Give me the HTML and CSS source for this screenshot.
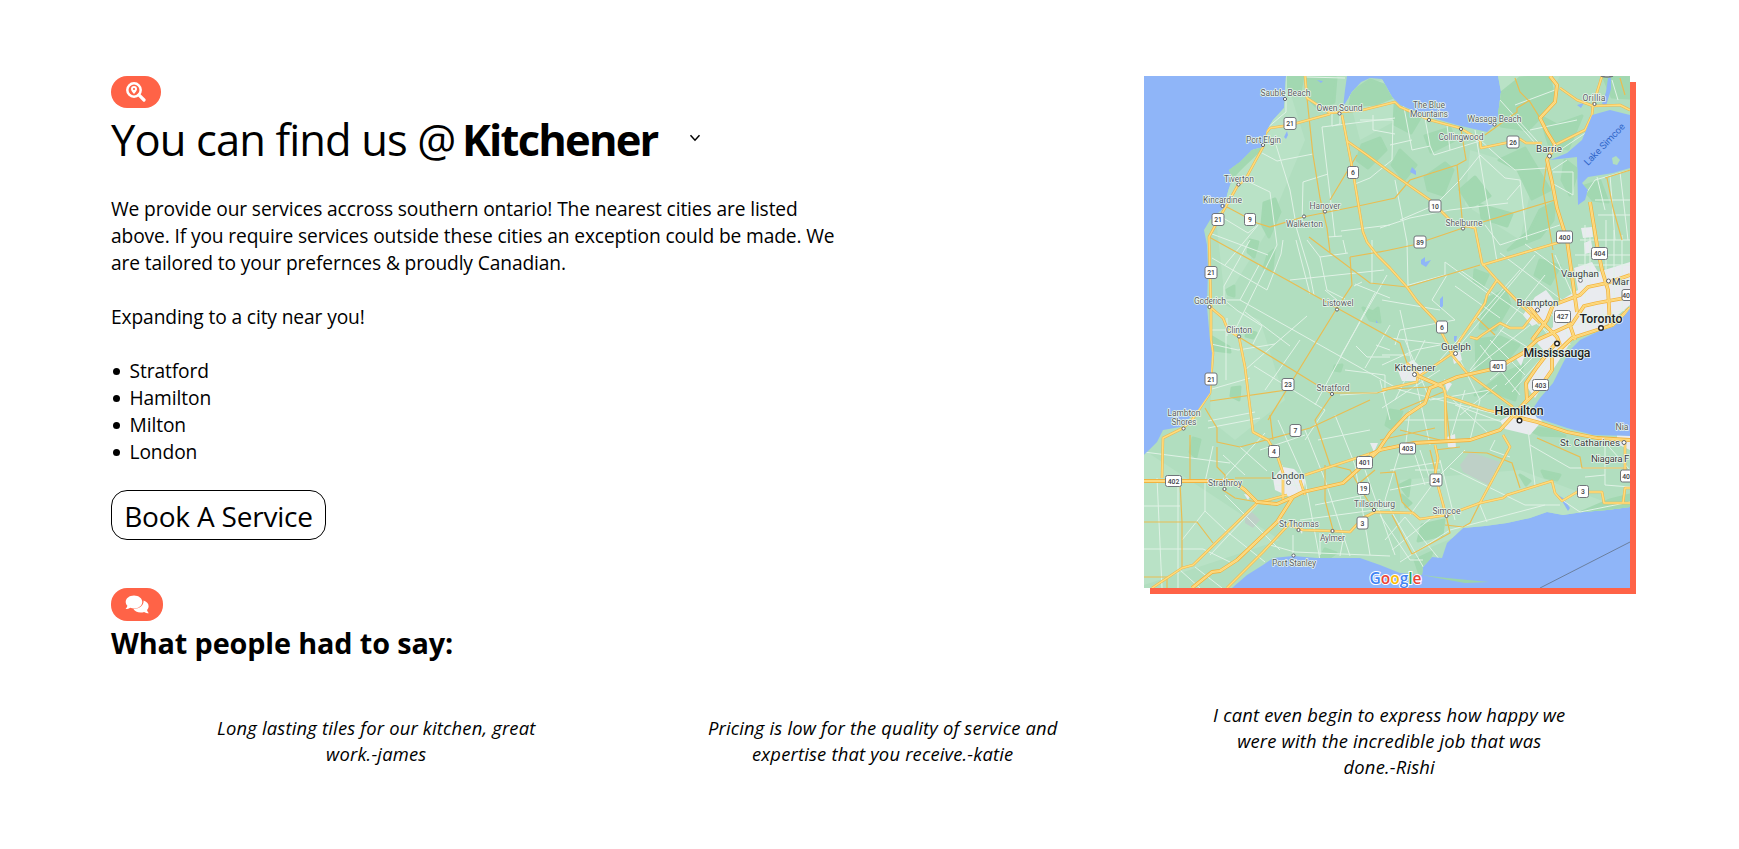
FILE: index.html
```html
<!DOCTYPE html>
<html lang="en">
<head>
<meta charset="utf-8">
<title>Locations</title>
<link rel="stylesheet" href="styles.css">
</head>
<body>
<main class="page">
  <section class="location">
    <div class="info">
      <span class="pill pill-search">
        <svg width="20" height="20" viewBox="0 0 20 20"><circle cx="8" cy="8" r="6.7" fill="none" stroke="#fff" stroke-width="2.5"/><path d="M12.9 12.9L18 18" stroke="#fff" stroke-width="3.2" stroke-linecap="round"/><path fill="#fff" fill-rule="evenodd" d="M8 4a3 3 0 0 1 3 3c0 1.700-1.500 3.300-3 5-1.500-1.700-3-3.300-3-5a3 3 0 0 1 3-3zm0 1.900a1.100 1.100 0 1 0 0 2.200 1.100 1.100 0 0 0 0-2.200z"/></svg>
      </span>
      <h1 class="title"><span class="title-lead">You can find us @</span><span class="city">Kitchener</span>
        <svg class="chevron" width="12" height="8" viewBox="0 0 12 8"><path d="M1.500 1.200L6 6.200L10.500 1.200" fill="none" stroke="#000" stroke-width="1.500"/></svg>
      </h1>
      <p class="copy">We provide our services accross southern ontario! The nearest cities are listed<br>above. If you require services outside these cities an exception could be made. We<br>are tailored to your prefernces &amp; proudly Canadian.</p>
      <p class="copy">Expanding to a city near you!</p>
      <ul class="cities"><li>Stratford</li><li>Hamilton</li><li>Milton</li><li>London</li></ul>
      <button class="book">Book A Service</button>
    </div>
    <svg class="map" width="486" height="512" viewBox="1144 76 486 512">
      <defs>
        <clipPath id="landclip"><path d="M1286 76L1285 98L1284 108L1273 120L1267 130L1263 147L1252 150L1240 162L1229 170L1232 178L1227 195L1225 207L1210 220L1204 230L1207 245L1208 270L1207 307L1210 340L1212 353L1210 393L1198 410L1180 427L1163 430L1157 442L1144 455V588H1232L1247 575L1263 565L1273 558L1293 556L1317 558L1360 558L1380 565L1400 573L1422 575L1423 567L1432 557L1442 558L1447 543L1463 528L1485 526L1507 523L1530 518L1547 512L1563 515L1583 512L1607 510L1630 507V436L1593 435L1567 428L1537 418L1532 410L1540 398L1553 383L1563 363L1570 350L1580 340L1597 332L1613 327L1625 315L1630 308V168L1613 173L1588 177L1582 183L1588 190L1585 200L1578 205L1577 157L1550 160L1567 153L1582 140L1592 115L1610 110L1630 115V76H1498L1501 92L1497 122L1487 132L1457 125L1430 117L1400 105L1392 97L1382 79L1370 78L1361 82L1352 92L1343 107L1345 90L1347 76Z"/></clipPath>
        <g id="motorway">
          <path d="M1144 481H1233L1245 490L1257 502L1277 504L1293 497"/>
          <path d="M1192 588L1212 572L1220 571L1237 560L1277 522L1293 497L1303 492L1343 483L1363 465L1377 452L1390 433L1407 415L1425 403L1430 388L1443 383L1457 377L1497 368L1523 353L1537 340L1572 324L1584 306L1597 303L1630 297"/>
          <path d="M1370 455L1380 450L1413 443L1470 440L1500 430L1513 416L1527 400L1526 383L1537 367L1550 350L1557 342"/>
          <path d="M1525 403L1538 390L1552 370V357L1572 338L1597 330L1613 325L1630 308"/>
          <path d="M1513 416L1537 422L1567 432L1597 438L1630 440"/>
          <path d="M1550 76L1557 85L1555 102L1540 118L1547 132L1555 145L1547 160L1552 182L1557 208L1567 240L1577 312"/>
          <path d="M1590 202L1597 245L1602 270L1608 290L1610 325"/>
          <path d="M1532 340L1547 320L1553 305L1580 295L1588 287L1607 283L1630 275"/>
          <path d="M1526 303L1540 320L1557 337L1560 345M1418 376L1443 387M1567 316L1575 340"/>
        </g>
        <g id="highway">
          <path d="M1305 76L1307 98L1330 113L1363 110L1395 102L1400 107L1430 120L1460 128L1480 140L1481 148L1510 142L1520 139L1526 143L1542 143"/>
          <path d="M1330 114L1290 125L1270 128L1266 133L1263 147L1245 180L1238 185L1225 208L1209 237L1211 307V340L1213 353L1210 393L1192 420L1183 428L1163 438L1162 478"/>
          <path d="M1342 115L1353 172L1363 232L1367 242L1377 255L1390 268L1407 287L1417 301L1435 320L1447 343L1452 355L1467 373L1513 407"/>
          <path d="M1347 141L1367 155L1390 172L1430 200L1452 222L1475 228L1482 263L1497 280L1523 307L1540 323"/>
          <path d="M1482 265L1533 250L1567 240M1497 280L1487 295L1485 303L1460 340L1453 353L1418 377"/>
          <path d="M1470 337L1477 339L1482 335L1500 323L1510 328L1523 328L1537 310"/>
          <path d="M1382 390L1417 382L1418 374L1407 363M1443 387L1446 396L1487 410L1515 416M1445 390L1446 440"/>
          <path d="M1555 145L1585 130L1592 115L1593 105L1602 76M1560 88L1577 100L1593 106L1620 105L1630 110"/>
          <path d="M1210 307L1223 318L1228 330L1239 337L1245 367L1253 432L1268 440L1277 455L1283 473V500"/>
          <path d="M1290 525L1303 530L1333 531L1350 532L1363 518L1375 512L1413 513L1420 519L1447 515L1480 503L1503 498L1507 495L1552 481L1555 493L1562 501L1577 492H1602L1604 503H1630"/>
          <path d="M1435 445L1438 458L1435 475L1446 515M1503 435L1510 447L1480 503M1305 475L1390 447M1625 442V475M1623 503L1625 488H1630"/>
          <path d="M1152 588L1182 568L1193 565L1257 503L1287 495M1227 588L1263 552L1290 523M1300 480L1305 495"/>
        </g>
      </defs>
      <rect x="1144" y="76" width="486" height="512" fill="#8fb5f8"/>
      <g clip-path="url(#landclip)">
        <rect x="1144" y="76" width="486" height="512" fill="#b1debf"/>
        <g fill="#b9e2c6">
          <path d="M1285 76L1305 140L1265 235L1225 300L1215 210L1265 130ZM1347 90L1390 78L1397 120L1360 140ZM1470 150L1535 170L1520 240L1465 205ZM1213 300L1260 320L1285 400L1235 440L1210 420ZM1144 450L1280 540L1144 585ZM1400 480L1520 470L1600 500L1630 508L1460 535L1400 560ZM1497 76L1560 76L1540 110L1500 120Z"/>
        </g>
        <g class="forest">
          <path d="M1286 76L1303 76L1300 92L1287 96ZM1307 78L1336 78L1334 102L1318 108L1308 98ZM1395 105L1420 118L1411 133L1394 124ZM1362 145L1380 138L1386 150L1368 168L1357 160ZM1264 203L1275 199L1280 212L1269 237L1262 224ZM1250 240L1258 242L1254 257L1248 252ZM1268 255L1274 250L1272 270L1264 268ZM1229 170L1252 150L1262 148L1243 166L1233 176ZM1352 92L1370 80L1392 88L1393 97L1376 104L1350 106Z"/>
          <path d="M1425 177L1445 163L1453 170L1443 195L1428 190ZM1460 190L1475 177L1490 196L1471 207ZM1480 205L1512 214L1507 226L1482 218ZM1499 160L1525 148L1550 190L1532 199L1518 170ZM1495 98L1520 78L1550 76L1554 103L1528 130L1501 126ZM1540 116L1557 125L1582 116L1568 149L1549 144ZM1604 78L1630 76V98L1612 97ZM1425 136L1450 128L1455 140L1431 152ZM1400 150L1416 165L1404 180L1392 165Z"/>
          <path d="M1540 210L1555 202L1553 220L1540 237L1508 250L1530 230ZM1485 300L1505 290L1510 304L1495 330L1480 328ZM1476 340L1500 337L1519 345L1500 368L1477 369ZM1475 395L1505 373L1523 365L1515 400L1494 392ZM1540 260L1560 266L1550 284L1535 275ZM1565 160L1578 170L1570 195L1562 180ZM1582 187L1600 181L1608 202L1593 200ZM1475 270L1488 275L1483 286L1474 281Z"/>
          <path d="M1212 337L1229 347L1230 352L1214 350ZM1232 388L1240 387L1239 400L1231 396ZM1227 290L1234 286L1234 296L1228 294ZM1247 331L1256 333L1253 338L1246 336ZM1193 438L1200 440L1196 457L1190 452ZM1335 366L1342 365L1340 371L1334 370ZM1363 308L1373 312L1378 308L1380 322L1370 320ZM1325 549L1336 553L1330 557L1321 557ZM1422 525L1444 520L1442 535L1418 541ZM1400 485L1410 480L1408 496ZM1542 471L1560 475L1557 480L1545 477ZM1520 475L1530 481L1526 485ZM1582 512L1610 500L1630 495V508ZM1402 495L1411 503L1406 507ZM1390 410L1402 412L1394 430L1386 425ZM1415 560L1432 552L1425 570L1420 575ZM1518 425L1550 430L1565 436L1540 435Z"/>
        </g>
        <g fill="#e9ebef">
          <path d="M1273 478L1283 467L1294 469L1305 480L1304 490L1290 497L1275 490ZM1397 368L1413 360L1424 370L1419 381L1402 381ZM1523 315L1535 297L1546 290L1556 303L1550 318L1532 326ZM1553 305L1578 290L1574 268L1592 262L1598 272L1630 262V305L1600 330L1572 340L1535 398L1527 387L1545 352L1537 343L1553 327ZM1515 357L1525 355L1521 366ZM1500 421L1528 405L1542 421L1530 435L1505 429ZM1452 355L1460 351L1462 360L1454 364ZM1444 379L1452 384L1447 392ZM1617 435L1630 428V450L1617 444ZM1447 437L1455 434L1456 448L1448 447ZM1298 527L1303 528L1302 534ZM1244 494L1251 495L1248 500ZM1370 443L1378 443L1374 452ZM1581 228L1592 227L1593 237L1583 238ZM1584 243L1591 240L1593 252L1585 254Z"/>
        </g>
        <path d="M1460 465L1470 452L1500 462L1488 485L1463 472ZM1245 515L1252 512L1260 520L1253 528L1245 523Z" fill="#bed0c7"/>
        <g fill="#8fb5f8"><path d="M1412 167l4 4v4l-6-3zM1421 260l4-3v5l6-2-5 7-5-3zM1440 299l3-3v10l-3 3zM1454 336l3 0-1 6-2-1zM1284 137l3-6 1 4-2 4zM1376 320l2 3-2 0zM1608 78L1606 92L1602 104L1606 106L1611 89V78zM1577 105l7-2-3 5zM1317 80l6 1-2 2zM1553 492l10 6 7 10-2 3-6-10z"/></g>
        <g class="street">
          <path d="M1286 76V112L1267 128M1276 145L1290 190L1297 230L1309 270L1314 295M1262 153L1277 161L1313 154M1245 180L1270 192L1277 245L1235 330M1302 225L1303 182L1328 174M1335 237L1322 127L1395 118M1332 113V126L1340 124V110M1360 120L1393 120L1392 160L1370 178L1355 184M1373 115V130L1395 134M1306 77L1345 78M1328 237L1342 236M1341 231L1390 225"/>
          <path d="M1215 213L1248 233L1258 225L1225 265M1212 234L1268 255M1212 258L1267 290L1281 254L1283 240M1224 300H1240L1400 390M1259 265L1240 300M1250 240L1224 286V300L1238 311L1262 326L1253 344M1307 316L1245 370M1340 357L1387 275M1315 405L1375 293M1245 312L1290 346M1211 330H1226V380M1211 344L1238 350L1275 344M1227 318V336M1212 389L1250 378M1254 366L1325 410L1305 440M1265 390L1300 340"/>
          <path d="M1340 395L1385 392V375L1345 370M1365 368L1390 325M1356 346L1367 357H1390M1376 345L1390 350M1390 298L1355 284M1296 240L1310 294M1320 257L1348 253M1290 280L1384 270M1343 240L1346 253M1325 290L1337 300M1307 240L1320 257M1354 286L1362 282M1372 240V284M1320 257L1327 290L1345 299"/>
          <path d="M1403 102L1412 150L1430 146L1434 155L1480 141M1390 145L1412 140M1425 118L1430 146M1447 125L1450 150M1475 130L1497 262M1395 180L1407 242L1408 285M1380 228L1410 218L1450 210L1508 203M1400 220L1435 205L1460 180L1480 155L1505 178L1520 180L1527 240M1480 140L1500 158L1515 170L1547 168M1500 100L1545 150M1515 105L1555 90M1530 130L1577 120M1510 115L1535 143M1485 225L1500 245L1560 225M1550 182L1573 195V172H1553M1567 160L1552 170"/>
          <path d="M1405 286L1445 275V262L1490 295M1447 275L1432 300L1455 320L1400 330L1395 345M1455 286L1500 318M1460 270L1560 340M1500 253L1562 300M1525 244L1560 270M1520 270L1440 360M1535 255L1460 345M1545 275L1470 370M1490 340L1525 375M1480 345L1520 395M1500 330L1535 352M1470 372L1530 325M1490 380L1525 350M1505 385L1535 355M1512 392L1540 360"/>
          <path d="M1382 300L1440 310M1390 338L1450 345M1400 310L1420 400M1382 365L1415 350L1440 345M1382 408L1440 370M1390 420L1380 380M1405 340L1430 400L1490 390M1448 395L1490 435M1465 390L1450 440M1480 400L1470 440M1400 420H1500M1497 385L1460 415M1382 355H1410M1425 340L1395 400M1400 390L1500 415M1460 360L1480 400M1410 410L1405 450M1420 400L1430 445M1455 405L1510 425"/>
          <path d="M1144 452L1230 463M1157 478L1162 588M1178 482V588M1144 506H1180M1144 549H1203L1230 562M1213 446L1205 482V511L1225 530L1265 562M1205 511L1182 540M1208 421L1255 412M1208 428L1260 418M1223 455L1245 475M1240 447L1267 471M1222 480L1265 433M1278 420L1305 480L1320 560M1305 430L1325 480L1350 556M1335 415L1355 465L1370 555M1260 450L1305 435M1225 495L1280 550M1210 555L1260 502M1195 567L1222 588M1180 570L1200 588M1315 505L1365 495M1300 520L1390 508M1293 535V555M1270 545L1295 552L1390 556M1320 533V555M1344 535L1340 556M1365 470L1395 555M1318 440L1370 430"/>
          <path d="M1415 455L1425 485M1400 450L1385 500L1425 570M1390 490L1440 480M1420 450L1432 485L1410 515M1440 460L1455 520M1450 468L1525 505H1560M1465 450L1440 475M1392 550L1435 515M1400 562L1450 530L1545 505M1405 517L1440 560M1480 505L1487 522M1528 430L1535 485M1530 445L1570 468H1625M1605 440V485L1630 487M1585 477L1605 475M1600 437L1630 470M1562 500L1580 512L1630 502M1415 470H1440M1390 470L1440 462M1380 515L1410 560L1423 560M1385 540L1405 517M1495 440L1490 450L1510 457"/>
          <path d="M1585 195L1595 180L1630 170M1597 177L1605 210M1610 175L1615 240M1620 172L1628 240M1595 200H1630M1598 215H1630M1580 240H1630M1585 225V300M1590 235V290M1606 220V280M1614 230V300M1622 235V310M1575 255H1630M1578 265H1630M1555 255L1575 300M1545 310L1575 330M1560 330L1600 318M1560 310L1570 345M1585 310V332M1593 305V330M1602 305L1605 325M1580 320L1625 310M1580 287L1625 283M1530 312L1560 350M1535 377L1555 350M1530 390L1547 365M1282 465V495M1276 485H1304M1289 470L1300 495M1560 150L1590 130M1612 80L1618 100M1507 200L1520 185"/>
        </g>
        <g class="minor">
          <path d="M1307 98L1313 155L1320 198L1327 228L1330 252M1227 207L1257 223L1270 227L1303 217L1363 205L1395 198L1410 180L1457 165L1463 228M1457 165L1466 160L1461 129M1380 252L1413 245L1463 228L1555 200M1209 237L1287 280L1337 308L1400 343L1407 363M1309 237L1370 283L1407 287L1480 265M1350 257L1390 250M1350 257L1352 285L1337 308L1297 373L1268 420M1239 337L1330 393H1377L1390 389L1430 387"/>
          <path d="M1210 401L1287 390M1332 395L1315 420L1330 465L1350 470L1360 488L1375 512M1190 435V480M1205 408L1217 428V442L1240 447L1310 428L1370 400M1180 482L1182 522V568M1144 522H1197L1213 543M1144 577H1167V588M1217 447V467L1225 475V480M1235 478H1275M1230 480L1223 490L1235 498L1257 502M1325 465V500L1333 530M1357 485L1375 470M1270 415L1273 440"/>
          <path d="M1463 452L1487 453L1512 463L1520 488M1537 438L1580 457L1582 468H1627M1380 473L1395 472L1402 502L1413 513M1392 515L1412 554L1450 533L1446 515M1480 503L1470 523L1463 527L1445 525M1607 178L1613 208L1622 240M1605 178L1630 170M1515 78L1520 92L1530 102L1540 118M1530 100L1517 108V112L1485 135M1552 253L1560 303M1477 318L1495 335M1445 396L1450 440M1443 392L1400 410M1400 430L1440 440M1435 450L1460 447M1357 155L1330 200M1547 160L1543 190L1553 250M1380 440L1435 428M1620 78L1625 95M1437 478L1430 450"/>
        </g>
        <use href="#highway" class="hw-edge"/><use href="#highway" class="hw-fill"/>
        <use href="#motorway" class="mw-edge"/><use href="#motorway" class="mw-fill"/>
        <use href="#motorway" class="mw-mid"/>
      </g>
      <path d="M1422 575L1447 578L1489 582L1465 583L1432 577Z" fill="#9dd5ad"/>
      <path d="M1540 588L1630 542" stroke="#6b7f9e" fill="none"/>
      <path d="M1612 158l4-2 4 4-3 5-4-1z" fill="#b1debf"/>
      <g class="shields">
        <g><rect x="1284" y="117.500" width="12" height="12" rx="2"/><rect x="1212" y="213.500" width="12" height="12" rx="2"/><rect x="1205" y="266.500" width="12" height="12" rx="2"/><rect x="1205" y="373" width="12" height="12" rx="2"/><rect x="1282" y="378.500" width="12" height="12" rx="2"/><rect x="1244.500" y="213.500" width="11" height="12" rx="2"/><rect x="1347.500" y="166.500" width="11" height="12" rx="2"/><rect x="1429" y="200" width="12" height="12" rx="2"/><rect x="1414" y="236" width="12" height="12" rx="2"/><rect x="1507" y="136" width="12" height="12" rx="2"/><rect x="1436.500" y="321" width="11" height="12" rx="2"/><rect x="1290" y="424.500" width="11" height="12" rx="2"/><rect x="1268.500" y="445.500" width="11" height="12" rx="2"/><rect x="1357.500" y="482.500" width="12" height="12" rx="2"/><rect x="1357" y="517" width="11" height="12" rx="2"/><rect x="1430" y="474" width="12" height="12" rx="2"/><rect x="1577.500" y="485.500" width="11" height="12" rx="2"/></g>
        <g><rect x="1556.500" y="231" width="16" height="12" rx="2"/><rect x="1591.500" y="247.500" width="16" height="12" rx="2"/><rect x="1554.500" y="310.500" width="16" height="12" rx="2"/><rect x="1490" y="360.500" width="16" height="11" rx="2"/><rect x="1532.500" y="379.500" width="16" height="11" rx="2"/><rect x="1399.500" y="443" width="16" height="11" rx="2"/><rect x="1356.500" y="456.500" width="16" height="12" rx="2"/><rect x="1165.500" y="475.500" width="16" height="11" rx="2"/><rect x="1622" y="289.500" width="16" height="11" rx="2"/><rect x="1620.500" y="470" width="16" height="12" rx="2"/></g>
        <path d="M1601 76q6 2 12 0" stroke-width="1.500"/>
      </g>
      <g class="nums">
        <text x="1290" y="126">21</text><text x="1218" y="222">21</text><text x="1211" y="275">21</text><text x="1211" y="381.500">21</text><text x="1288" y="387">23</text><text x="1250" y="222">9</text><text x="1353" y="175">6</text><text x="1435" y="208.500">10</text><text x="1420" y="244.500">89</text><text x="1513" y="144.500">26</text><text x="1442" y="329.500">6</text><text x="1295.500" y="433">7</text><text x="1274" y="454">4</text><text x="1363.500" y="491">19</text><text x="1362.500" y="525.500">3</text><text x="1436" y="482.500">24</text><text x="1583" y="494">3</text><text x="1564.500" y="239.500">400</text><text x="1599.500" y="256">404</text><text x="1562.500" y="319">427</text><text x="1498" y="368.500">401</text><text x="1540.500" y="387.500">403</text><text x="1407.500" y="451">403</text><text x="1364.500" y="465">401</text><text x="1173.500" y="483.500">402</text><text x="1626" y="297.500">40</text><text x="1626" y="478.500">40</text>
      </g>
      <g class="dots">
        <circle cx="1285" cy="99" r="1.600"/><circle cx="1339.500" cy="113.500" r="1.600"/><circle cx="1263" cy="145" r="1.600"/><circle cx="1238.500" cy="184.500" r="1.600"/><circle cx="1222.500" cy="206" r="1.600"/><circle cx="1325" cy="211.500" r="1.600"/><circle cx="1304" cy="216.500" r="1.600"/><circle cx="1429" cy="120" r="1.600"/><circle cx="1461" cy="129" r="1.600"/><circle cx="1494.500" cy="124.500" r="1.600"/><circle cx="1594.500" cy="104" r="1.600"/><circle cx="1549.500" cy="156" r="2"/><circle cx="1463" cy="228.500" r="1.600"/><circle cx="1209.500" cy="307" r="1.600"/><circle cx="1239" cy="336.500" r="1.600"/><circle cx="1337" cy="309.500" r="1.600"/><circle cx="1332" cy="394" r="1.600"/><circle cx="1183.500" cy="428.500" r="1.600"/><circle cx="1224.500" cy="489" r="1.600"/><circle cx="1288.500" cy="482.500" r="2"/><circle cx="1298.500" cy="530" r="1.600"/><circle cx="1332.500" cy="531" r="1.600"/><circle cx="1293.500" cy="555.500" r="1.600"/><circle cx="1374" cy="510" r="1.600"/><circle cx="1446.500" cy="516" r="1.600"/><circle cx="1455.500" cy="353.500" r="2"/><circle cx="1414.500" cy="374.500" r="2"/><circle cx="1537.500" cy="310" r="2"/><circle cx="1580.500" cy="280.500" r="1.800"/><circle cx="1608.500" cy="281" r="2"/><circle cx="1624" cy="442.500" r="2"/><g class="big"><circle cx="1601" cy="328" r="2.300"/><circle cx="1557" cy="343.500" r="2.300"/><circle cx="1519.500" cy="420.500" r="2.300"/></g>
      </g>
      <g class="labels">
        <text x="1285.500" y="96" textLength="50">Sauble Beach</text><text x="1339.500" y="110.500" textLength="46">Owen Sound</text><text x="1263.500" y="142.500" textLength="35">Port Elgin</text><text x="1239" y="181.500" textLength="30">Tiverton</text><text x="1222.500" y="203" textLength="39">Kincardine</text><text x="1325" y="208.500" textLength="31">Hanover</text><text x="1304.500" y="226.500" textLength="37">Walkerton</text><text x="1429" y="107.500" textLength="32">The Blue</text><text x="1429" y="117" textLength="38">Mountains</text><text x="1494.500" y="122" textLength="54">Wasaga Beach</text><text x="1461" y="139.500" textLength="45">Collingwood</text><text x="1594" y="101" textLength="23">Orillia</text><text x="1464" y="226" textLength="37">Shelburne</text><text x="1210" y="304" textLength="32">Goderich</text><text x="1239" y="333" textLength="26">Clinton</text><text x="1338" y="306" textLength="31">Listowel</text><text x="1333" y="390.500" textLength="33">Stratford</text><text x="1184" y="415.500" textLength="33">Lambton</text><text x="1184" y="424.500" textLength="25">Shores</text><text x="1225" y="486" textLength="34">Strathroy</text><text x="1299" y="527" textLength="40">St Thomas</text><text x="1332.500" y="541" textLength="25">Aylmer</text><text x="1294" y="566" textLength="44">Port Stanley</text><text x="1374.500" y="506.500" textLength="41">Tillsonburg</text><text x="1446.500" y="513.500" textLength="28">Simcoe</text><text x="1615.500" y="430" class="start">Nia</text>
        <g class="town"><text x="1549" y="152" textLength="26">Barrie</text><text x="1288" y="479" textLength="33">London</text><text x="1456" y="349.500" textLength="30">Guelph</text><text x="1415" y="371" textLength="41">Kitchener</text><text x="1537.500" y="305.500" textLength="42">Brampton</text><text x="1580" y="277" textLength="38">Vaughan</text><text x="1590" y="446" textLength="60">St. Catharines</text><text x="1612" y="285" class="start">Mar</text><text x="1591" y="462" class="start" textLength="38.500">Niagara F</text></g>
        <g class="metro"><text x="1601" y="323" textLength="43">Toronto</text><text x="1557" y="356.500" textLength="67">Mississauga</text><text x="1519" y="415" textLength="49">Hamilton</text></g>
      </g>
      <text class="lake" transform="translate(1588 166) rotate(-46)" textLength="54">Lake Simcoe</text>
      <text class="google" x="1369.500" y="584"><tspan fill="#4285f4">G</tspan><tspan fill="#ea4335">o</tspan><tspan fill="#fbbc05">o</tspan><tspan fill="#4285f4">g</tspan><tspan fill="#34a853">l</tspan><tspan fill="#ea4335">e</tspan></text>
    </svg>
  </section>
  <section class="reviews">
    <span class="pill pill-chat">
      <svg width="24" height="19" viewBox="0 0 24 19"><path fill="#fff" d="M9 0.500c4.700 0 8.300 2.900 8.300 6.500S13.700 13.500 9 13.500c-1.400 0-2.600-.2-3.700-.7C4 13.600 2.500 14 .6 14c.8-.9 1.600-2.100 1.800-3.200C1.300 9.700.7 8.400.7 7 .7 3.400 4.300.5 9 .5z"/><path fill="#fff" d="M18.600 5.500c3 .9 5 3.100 5 5.700 0 1.400-.6 2.700-1.600 3.700.3 1.200 1 2.400 1.800 3.300-1.900 0-3.500-.5-4.700-1.300-1 .4-2.200.6-3.400.6-3.400 0-6.300-1.500-7.400-3.800 5.600.3 10.600-2.800 10.300-8.200z"/></svg>
    </span>
    <h2 class="subtitle">What people had to say:</h2>
    <div class="quotes">
      <p class="quote">Long lasting tiles for our kitchen, great<br>work.-james</p>
      <p class="quote">Pricing is low for the quality of service and<br>expertise that you receive.-katie</p>
      <p class="quote">I cant even begin to express how happy we<br>were with the incredible job that was<br>done.-Rishi</p>
    </div>
  </section>
</main>
</body>
</html>
```
FILE: styles.css
```css
* { box-sizing: border-box; }
body { margin: 0; background: #fff; color: #000; font-family: "Open Sans", "Noto Sans", sans-serif; }
.page { width: 1739px; height: 849px; padding: 76px 109px 0 111px; overflow: hidden; }
.location { display: flex; justify-content: space-between; width: 1519px; height: 512px; }
.info { display: flex; flex-direction: column; align-items: flex-start; }
.pill { display: flex; align-items: center; justify-content: center; background: #ff6347; border-radius: 16px; }
.pill-search { width: 50px; height: 32px; }
.pill-chat { width: 52px; height: 33px; }
.title { display: flex; align-items: center; height: 60px; margin: 2px 0 0; font-size: 43.500px; font-weight: 400; line-height: 58px; white-space: nowrap; }
.title-lead { width: 351px; letter-spacing: -0.88px; }
.city { width: 227px; font-weight: 700; letter-spacing: -1.8px; }
.chevron { margin-top: -4px; }
.copy { margin: 0 0 27px; font-size: 19.200px; line-height: 27px; letter-spacing: -0.120px; white-space: nowrap; }
.title + .copy { margin-top: 25px; }
.cities { margin: 0; padding-left: 19px; list-style: none; font-size: 19.200px; line-height: 27px; letter-spacing: -0.1px; }
.cities li { display: flex; align-items: center; }
.cities li::before { content: ""; width: 7px; height: 7px; margin: 2px 9.500px 0 -17px; border-radius: 50%; background: #000; }
.book { width: 215px; height: 50px; margin-top: 25px; padding: 2px 0 0; border: 1px solid #000; border-radius: 16px; background: #fff; color: #000; font: 28px/46px "Open Sans", sans-serif; letter-spacing: -0.2px; white-space: nowrap; }
.subtitle { margin: 2px 0 0; font-size: 28.800px; line-height: 40px; letter-spacing: -0.120px; }
.quotes { display: grid; grid-template-columns: repeat(3, 506.500px); align-items: center; height: 78px; margin-top: 39px; margin-left: 12px; }
.quote { margin: 0; font-size: 18.400px; font-style: italic; line-height: 26px; letter-spacing: 0.180px; text-align: center; white-space: nowrap; }
.map { display: block; flex: none; box-shadow: 6px 6px 0 #ff6347; font-family: Roboto, sans-serif; }
.forest { fill: #a2d8b1; stroke: #a2d8b1; stroke-width: 3; stroke-linejoin: round; }
.street { fill: none; stroke: #e0f2e6; stroke-width: 1; }
.minor { fill: none; stroke: #e9bd52; stroke-width: 1.2; }
.hw-edge { fill: none; stroke: #efb84d; stroke-width: 2.6; stroke-linejoin: round; }
.hw-fill { fill: none; stroke: #ffdc7c; stroke-width: 1.5; stroke-linejoin: round; }
.mw-edge { fill: none; stroke: #f2b340; stroke-width: 3.8; stroke-linejoin: round; }
.mw-fill { fill: none; stroke: #ffe18c; stroke-width: 2.2; stroke-linejoin: round; }
.mw-mid { fill: none; stroke: #f7c75c; stroke-width: 0.5; }
.shields { fill: #fff; stroke: #70757a; stroke-width: 1; }
.nums { font-size: 6.8px; font-weight: 500; fill: #3c4043; text-anchor: middle; }
.dots { fill: #fff; stroke: #5f6368; stroke-width: 1; }
.dots .big { stroke: #202124; stroke-width: 1.4; }
.labels { font-size: 8.6px; fill: #5b6065; stroke: #e8f5ec; stroke-width: 1.6; stroke-linejoin: round; paint-order: stroke; text-anchor: middle; }
.town { font-size: 9.8px; fill: #3c4043; }
.metro { font-size: 12.3px; font-weight: 500; fill: #202124; }
.start { text-anchor: start; }
.lake { font-size: 9.6px; fill: #2f66c9; }
.google { font: 600 15.500px "Open Sans", sans-serif; stroke: #fff; stroke-width: 2; paint-order: stroke; }
```
